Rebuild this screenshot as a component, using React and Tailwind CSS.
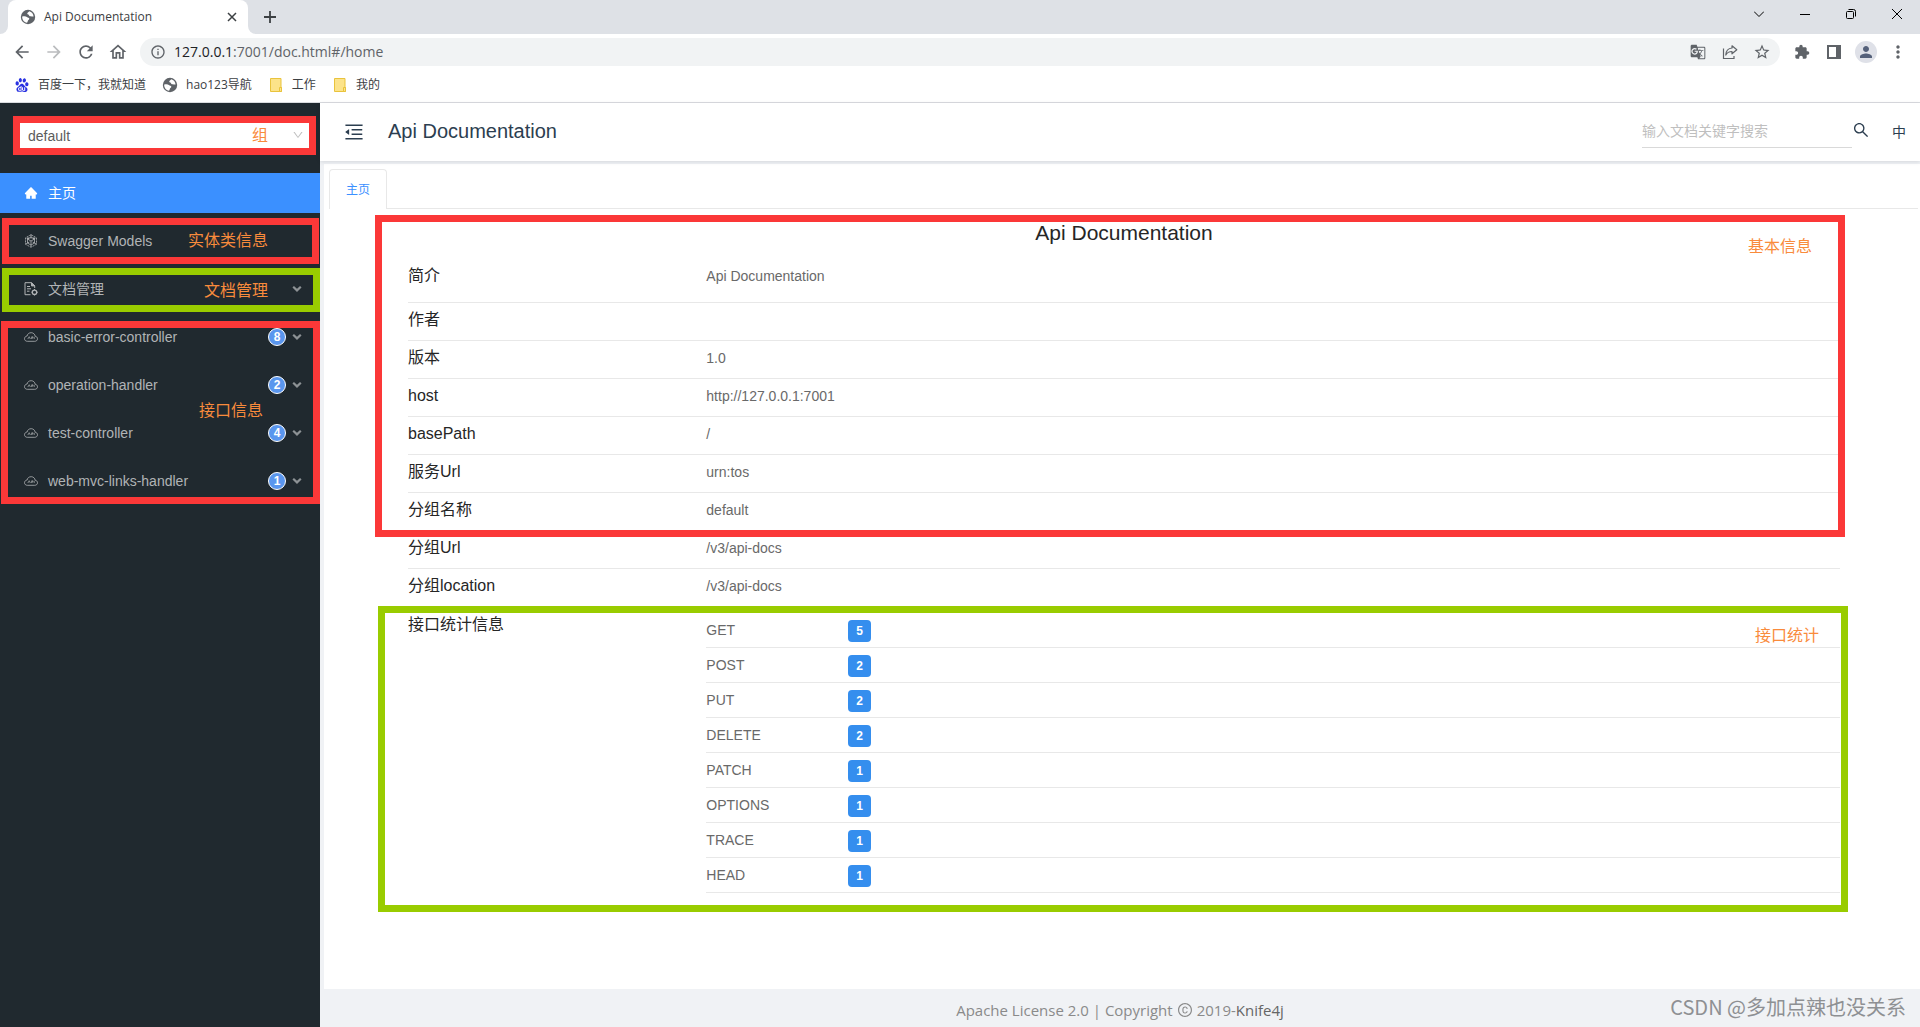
import { AiFillHome, AiOutlineCopyright, AiOutlineMenuFold, AiOutlineSearch, AiOutlineDown } from 'react-icons/ai';
import {
  MdArrowBack,
  MdArrowForward,
  MdExtension,
  MdGTranslate,
  MdMoreVert,
  MdOutlineHome,
  MdPerson,
  MdRefresh,
  MdOutlineInfo,
  MdStarBorder,
} from 'react-icons/md';
import { SiBaidu } from 'react-icons/si';

const CONTROLLERS = [
  { name: 'basic-error-controller', count: 8 },
  { name: 'operation-handler', count: 2 },
  { name: 'test-controller', count: 4 },
  { name: 'web-mvc-links-handler', count: 1 },
];

const BASIC_INFO = [
  { label: '作者', value: '' },
  { label: '版本', value: '1.0' },
  { label: 'host', value: 'http://127.0.0.1:7001' },
  { label: 'basePath', value: '/' },
  { label: '服务Url', value: 'urn:tos' },
  { label: '分组名称', value: 'default' },
  { label: '分组Url', value: '/v3/api-docs' },
  { label: '分组location', value: '/v3/api-docs' },
];

const METHOD_STATS = [
  { method: 'GET', count: 5 },
  { method: 'POST', count: 2 },
  { method: 'PUT', count: 2 },
  { method: 'DELETE', count: 2 },
  { method: 'PATCH', count: 1 },
  { method: 'OPTIONS', count: 1 },
  { method: 'TRACE', count: 1 },
  { method: 'HEAD', count: 1 },
];

function GlobeIcon() {
  return (
    <svg viewBox="0 0 16 16" className="size-4">
      <circle cx="8" cy="8" r="7.200" fill="#5f6368" />
      <path d="M9.200 2.200c-.3 1-1.700 1-1.900 2-.2.900.5 1.300 1.500 1.500.2 1 .8 1.600 1.900 1.500.9-.1 1.400.5 2.900.3-.2-2.800-1.900-4.700-4.400-5.300z" fill="#fff" />
      <path d="M2.200 7.500c1.900-.5 3.600-.5 4.700.4.900.8 2.200.7 2.400 1.700.2 1.100-1.200 1.300-1.500 2.300-.2.800-.3 1.500-.8 1.900-2.900-.5-5-3-4.800-6.300z" fill="#fff" />
    </svg>
  );
}

function ShareIcon() {
  return (
    <svg viewBox="0 0 16 16" className="size-4" fill="none" stroke="currentColor" strokeWidth="1.2">
      <path d="M1.500 4.500v10h10.500v-2.500" />
      <path d="M10 1.800l4.800 4-4.800 4V7.500C7 7.500 5 8.700 3.800 11 4 7 6.500 4.300 10 4z" strokeLinejoin="round" />
    </svg>
  );
}

function FolderIcon() {
  return (
    <svg viewBox="0 0 12 14" className="h-3.5 w-3">
      <path d="M.5.5h10.500v9h.5v4H.5z" fill="#fce38a" stroke="#e9c33c" />
      <path d="M9.500 13.500v-4h2v4z" fill="#fce38a" stroke="#e9c33c" />
    </svg>
  );
}

function ModelsIcon() {
  return (
    <svg viewBox="0 0 14 14" className="size-3.5" fill="none" stroke="currentColor" strokeWidth="0.8">
      <path d="M7 .7l5.500 3.100v6.400L7 13.300 1.500 10.200V3.800z" strokeDasharray="2.200 0.800" />
      <path d="M7 3l3.500 2v4L7 11 3.500 9V5z" />
      <path d="M7 .7v4M7 7v6M3.500 5L7 7l3.500-2M1.500 10.200L5.300 8M12.500 10.200L8.700 8" />
      <circle cx="4" cy="4.500" r=".8" fill="currentColor" />
      <circle cx="10" cy="4.500" r=".8" fill="currentColor" />
    </svg>
  );
}

function DocIcon() {
  return (
    <svg viewBox="0 0 14 14" className="size-3.5" fill="none" stroke="currentColor">
      <path d="M6.500 12.700H1V.7h6.500l3.200 3.200V6" />
      <path d="M7.500.7v3.200h3.200z" fill="currentColor" />
      <path d="M3 4.500h3M3 6.800h4M3 9.200h2.500" />
      <circle cx="10.500" cy="10.300" r="2.200" strokeWidth="1.300" />
      <path d="M10.500 7v1M10.500 12.500v1M7.500 10.300h.8M12.800 10.300h.9" />
    </svg>
  );
}

function CloudIcon() {
  return (
    <svg viewBox="0 0 14 10" className="h-2.5 w-3.5" fill="none" stroke="currentColor" strokeWidth="0.800">
      <path d="M3.300 9.300h7.500c1.500 0 2.700-1 2.700-2.500S12.400 4.400 11.200 4.300C11 2.300 9.300.7 7.200.7 5 .7 3.400 2 3.100 4 1.600 4.200.5 5.300.5 6.700c0 1.500 1.200 2.600 2.800 2.600z" />
      <path d="M3.800 7l1.400-2.300L6.400 7M7.700 7V4.800h1.200V6H7.700M10.200 4.800V7" strokeWidth="0.700" />
    </svg>
  );
}

function ArrowIcon() {
  return (
    <svg viewBox="0 0 10 6" className="h-1.5 w-2.5 text-[#8d9295]" fill="none" stroke="currentColor" strokeWidth="2.200">
      <path d="M1.200.8L5 4.400 8.800.8" />
    </svg>
  );
}

// Outlined box with a caption, laid over the part of the page it describes
function Mark({ tone, box, note, children }) {
  return (
    <>
      <div className={`pointer-events-none absolute border-[7px] ${tone === 'green' ? 'border-[#99cc00]' : 'border-[#fb3838]'} ${box}`} />
      <span className={`pointer-events-none absolute text-base leading-6 text-[#f98b3c] ${note}`}>{children}</span>
    </>
  );
}

function TabStrip() {
  return (
    <div className="flex h-[34px] items-stretch bg-[#dee1e6] text-[#3c4043]">
      <div className="w-2 bg-white">
        <div className="h-full rounded-br-lg bg-[#dee1e6]" />
      </div>
      <div className="flex w-60 items-center rounded-t-lg bg-white pr-2.5 pl-3">
        <GlobeIcon />
        <span className="ml-2 flex-1 text-xs">Api Documentation</span>
        <button aria-label="Close tab" className="flex size-3 items-center justify-center">
          <svg viewBox="0 0 10 10" className="size-2.5" stroke="currentColor" strokeWidth="1.500">
            <path d="M1 1l8 8M9 1l-8 8" />
          </svg>
        </button>
      </div>
      <div className="w-2 bg-white">
        <div className="h-full rounded-bl-lg bg-[#dee1e6]" />
      </div>
      <button aria-label="New tab" className="ml-2 flex items-center">
        <svg viewBox="0 0 12 12" className="size-3" stroke="currentColor" strokeWidth="1.800">
          <path d="M6 0v12M0 6h12" />
        </svg>
      </button>
      <div className="mr-[18px] ml-auto flex items-center gap-9 pb-1.5 text-black">
        <button aria-label="Search tabs">
          <svg viewBox="0 0 10 10" className="size-2.5" fill="none" stroke="currentColor">
            <path d="M0 2.500l5 5 5-5" />
          </svg>
        </button>
        <button aria-label="Minimize">
          <svg viewBox="0 0 10 10" className="size-2.5" stroke="currentColor">
            <path d="M0 5.500h10" />
          </svg>
        </button>
        <button aria-label="Restore">
          <svg viewBox="0 0 10 10" className="size-2.5" fill="none" stroke="currentColor">
            <rect x=".5" y="2.500" width="7" height="7" rx="1" />
            <path d="M2.500.5h5a2 2 0 0 1 2 2v5" />
          </svg>
        </button>
        <button aria-label="Close">
          <svg viewBox="0 0 10 10" className="size-2.5" stroke="currentColor">
            <path d="M0 0l10 10M10 0L0 10" />
          </svg>
        </button>
      </div>
    </div>
  );
}

function Toolbar() {
  return (
    <div className="flex items-center bg-white py-1 pr-1.5 pl-3 text-[#5f6368]">
      <div className="flex gap-3">
        <button aria-label="Back"><MdArrowBack className="size-5" /></button>
        <button aria-label="Forward" className="text-[#babcbe]"><MdArrowForward className="size-5" /></button>
        <button aria-label="Reload"><MdRefresh className="size-5" /></button>
        <button aria-label="Home"><MdOutlineHome className="size-5" /></button>
      </div>
      <div className="ml-3 flex h-7 flex-1 items-center rounded-full bg-[#f1f3f4] pr-0.5 pl-2.5">
        <MdOutlineInfo className="size-4" />
        <span className="ml-2 text-sm">
          <span className="text-[#202124]">127.0.0.1</span>:7001/doc.html#/home
        </span>
        <div className="ml-auto flex items-center">
          <button aria-label="Translate" className="flex w-8 justify-center"><MdGTranslate className="size-4" /></button>
          <button aria-label="Share" className="flex w-8 justify-center"><ShareIcon /></button>
          <button aria-label="Bookmark" className="flex w-8 justify-center"><MdStarBorder className="size-[18px]" /></button>
        </div>
      </div>
      <div className="ml-1.5 flex items-center">
        <button aria-label="Extensions" className="flex w-8 justify-center"><MdExtension className="size-4" /></button>
        <button aria-label="Side panel" className="flex w-8 justify-center">
          <svg viewBox="0 0 14 14" className="size-3.5">
            <path d="M0 0h14v14H0zM2 2v10h7V2z" fill="currentColor" fillRule="evenodd" />
          </svg>
        </button>
        <button aria-label="Profile" className="flex w-8 justify-center text-[#55617a]">
          <span className="flex size-[22px] items-center justify-center rounded-full bg-[#dfe1e8]">
            <MdPerson className="size-[18px]" />
          </span>
        </button>
        <button aria-label="Menu" className="flex w-8 justify-center"><MdMoreVert className="size-5" /></button>
      </div>
    </div>
  );
}

function Bookmarks() {
  return (
    <div className="flex items-center border-b border-[#dadce0] bg-white px-[15px] pt-[7px] pb-[9px] text-xs leading-4 text-[#3c4043]">
      <a href="#baidu" className="flex items-center gap-[9px]">
        <SiBaidu className="size-3.5 text-[#2932e1]" />
        百度一下，我就知道
      </a>
      <a href="#hao123" className="ml-4 flex items-center gap-2">
        <GlobeIcon />
        hao123导航
      </a>
      <a href="#work" className="ml-[18px] flex items-center gap-2.5">
        <FolderIcon />
        工作
      </a>
      <a href="#mine" className="ml-[18px] flex items-center gap-2.5">
        <FolderIcon />
        我的
      </a>
    </div>
  );
}

function MenuItem({ icon, label, count, expandable, active }) {
  return (
    <a
      href="#menu"
      className={`flex h-10 items-center pr-[18px] pl-6 ${active ? 'bg-[#3b90ff] text-white' : 'text-[#b1b4b6]'}`}
    >
      <span className="flex w-3.5 justify-center">{icon}</span>
      <span className="ml-2.5 flex-1">{label}</span>
      {count && (
        <span className="mr-1.5 flex size-[18px] items-center justify-center rounded-full border border-white bg-[#5a96ee] text-xs font-bold text-white">
          {count}
        </span>
      )}
      {expandable && <ArrowIcon />}
    </a>
  );
}

function Sidebar() {
  return (
    <aside className="w-80 shrink-0 bg-[#20292f] text-sm">
      <div className="relative py-5 pr-2.5 pl-5">
        <select aria-label="组" className="block h-[25px] w-full appearance-none bg-white px-2 text-sm text-[#5c5c5c]">
          <option>default</option>
        </select>
        <AiOutlineDown className="pointer-events-none absolute top-[26px] right-4 size-3 text-[#bfbfbf]" />
        <Mark box="top-[13px] right-1 left-[13px] h-[39px]" note="top-[21px] right-[52px]">组</Mark>
      </div>
      <nav className="mt-[5px] flex flex-col gap-2">
        <MenuItem active icon={<AiFillHome className="size-3.5" />} label="主页" />
        <div className="relative">
          <MenuItem icon={<ModelsIcon />} label="Swagger Models" />
          <Mark box="-top-[3px] right-px -bottom-[3px] left-0.5" note="top-2 right-[52px]">实体类信息</Mark>
        </div>
        <div className="relative">
          <MenuItem expandable icon={<DocIcon />} label="文档管理" />
          <Mark tone="green" box="-top-px right-0 -bottom-[3px] left-0.5" note="top-2.5 right-[52px]">文档管理</Mark>
        </div>
        <div className="relative flex flex-col gap-2">
          {CONTROLLERS.map((item) => (
            <MenuItem key={item.name} expandable icon={<CloudIcon />} label={item.name} count={item.count} />
          ))}
          <Mark box="top-1 right-0 -bottom-[3px] left-px" note="top-[82px] right-[57px]">接口信息</Mark>
        </div>
      </nav>
    </aside>
  );
}

function Header() {
  return (
    <header className="relative flex h-[58px] items-center bg-white pr-3.5 pl-[23px] text-[#2c3e50] shadow-[0_1px_4px_rgba(0,21,41,0.12)]">
      <button aria-label="Collapse menu"><AiOutlineMenuFold className="size-[22px]" /></button>
      <h1 className="ml-[23px] pb-0.5 text-xl">Api Documentation</h1>
      <input
        type="text"
        aria-label="搜索"
        placeholder="输入文档关键字搜索"
        className="ml-auto h-8 w-[210px] border-b border-[#d9d9d9] pb-0.5 text-sm placeholder:text-[#bfbfbf]"
      />
      <button aria-label="Search" className="pb-1"><AiOutlineSearch className="size-[18px]" /></button>
      <button className="ml-[22px] text-sm">中</button>
    </header>
  );
}

function InfoRow({ label, value }) {
  return (
    <div className="flex border-b border-[#e8e8e8] pt-[5px] pb-2 leading-6">
      <dt className="w-5/24 text-base text-[#262626]">{label}</dt>
      <dd className="flex-1 text-sm leading-6 text-[#696969]">{value}</dd>
    </div>
  );
}

function StatsTable() {
  return (
    <table className="w-full text-left text-sm text-[#696969]">
      <tbody>
        {METHOD_STATS.map(({ method, count }) => (
          <tr key={method} className="border-b border-[#e8e8e8]">
            <th scope="row" className="w-1/8 pt-1 pb-[5px] font-normal">{method}</th>
            <td className="pt-[7px] pb-[5px]">
              <span className="flex h-[22px] w-[23px] items-center justify-center rounded bg-[#358eee] text-xs font-bold text-white">
                {count}
              </span>
            </td>
          </tr>
        ))}
      </tbody>
    </table>
  );
}

function Home() {
  return (
    <div className="relative mr-20 ml-21">
      <h2 className="pt-2 pb-[9px] text-center text-[21px] leading-8 text-[#262626]">Api Documentation</h2>
      <dl>
        <div className="flex border-b border-[#e8e8e8] pt-1.5 pb-3.5 leading-6">
          <dt className="w-5/24 text-base text-[#262626]">简介</dt>
          <dd className="flex-1 text-sm leading-6 text-[#696969]">Api Documentation</dd>
        </div>
        {BASIC_INFO.map((row) => (
          <InfoRow key={row.label} label={row.label} value={row.value} />
        ))}
        <div className="relative flex pt-1.5 pb-5">
          <dt className="w-5/24 text-base leading-6 text-[#262626]">接口统计信息</dt>
          <dd className="flex-1"><StatsTable /></dd>
          <Mark tone="green" box="-top-px -right-2 bottom-px -left-[30px]" note="top-[17px] right-[21px]">接口统计</Mark>
        </div>
      </dl>
      <Mark box="top-1.5 -right-[5px] -left-[33px] h-[322px]" note="top-[26px] right-7">基本信息</Mark>
    </div>
  );
}

export default function App() {
  return (
    <div className="flex min-h-screen flex-col bg-white font-['Liberation_Sans','Noto_Sans_CJK_SC',sans-serif]">
      <div className="font-['Open_Sans','Noto_Sans_CJK_SC',sans-serif]">
        <TabStrip />
        <Toolbar />
        <Bookmarks />
      </div>
      <div className="flex flex-1">
        <Sidebar />
        <div className="flex min-w-0 flex-1 flex-col bg-[#f0f2f5]">
          <Header />
          <main className="mt-[3px] ml-1 flex-1 bg-white">
            <div className="flex items-end pt-[5px] pr-0.5">
              <div className="w-[5px] self-stretch border-b border-transparent" />
              <button className="h-10 rounded-t border border-b-0 border-[#e8e8e8] px-4 text-xs text-[#3b90ff]">主页</button>
              <div className="flex-1 border-b border-[#e8e8e8]" />
            </div>
            <Home />
          </main>
          <footer className="relative flex h-[38px] items-center justify-center pt-1 font-['Open_Sans','Noto_Sans_CJK_SC',sans-serif] text-[15px] text-[#8a8a8a]">
            <p className="flex items-center gap-1">
              Apache License 2.0 | Copyright
              <AiOutlineCopyright className="size-4" />
              <span>
                2019-<a href="#knife4j" className="text-[#666]">Knife4j</a>
              </span>
            </p>
            <span className="absolute right-3.5 bottom-1.5 font-['Noto_Sans_CJK_SC',sans-serif] text-xl leading-7 text-[#8e9093]">
              CSDN @多加点辣也没关系
            </span>
          </footer>
        </div>
      </div>
    </div>
  );
}
